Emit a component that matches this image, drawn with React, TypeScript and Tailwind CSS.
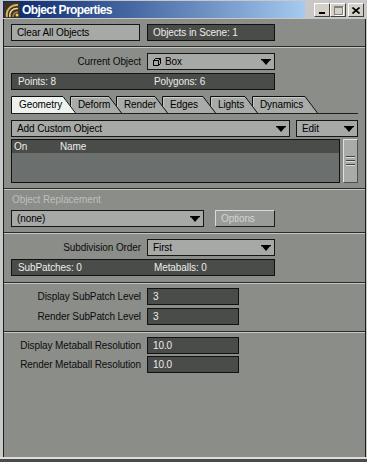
import type { ReactNode } from 'react';

const tabs = [
    { label: 'Geometry', w: 65 },
    { label: 'Deform', w: 52 },
    { label: 'Render', w: 52 },
    { label: 'Edges', w: 54 },
    { label: 'Lights', w: 48 },
    { label: 'Dynamics', w: 66 },
];

const tabZ = ['z-[6]', 'z-[5]', 'z-[4]', 'z-[3]', 'z-[2]', 'z-[1]'];

function Arrow() {
    return (
        <svg width="10" height="6" viewBox="0 0 10 6" className="shrink-0">
            <path d="M0 0H10V1.2H9L5 6L1 1.2H0Z" fill="#000" />
        </svg>
    );
}

function Dropdown({ children, className = '' }: { children: ReactNode; className?: string }) {
    return (
        <div
            className={`flex h-[17px] items-center justify-between border border-[#151515] bg-[#a6a9a6] pr-[3px] pl-[5px] text-black ${className}`}
        >
            <div className="flex items-center gap-[4px]">{children}</div>
            <Arrow />
        </div>
    );
}

function DarkField({ children, className = '' }: { children?: ReactNode; className?: string }) {
    return (
        <div
            className={`flex h-[17px] items-center border border-[#111] bg-[#4a4c49] pl-[5px] text-[#ececec] ${className}`}
        >
            {children}
        </div>
    );
}

function Separator() {
    return (
        <div>
            <div className="h-px bg-[#2a2b29]" />
            <div className="h-px bg-[#c6c8c5]" />
        </div>
    );
}

function LabeledRow({ label, children }: { label: string; children: ReactNode }) {
    return (
        <div className="flex items-center">
            <div className="w-[130px] text-right whitespace-nowrap text-[#0c0c0c]">{label}</div>
            <div className="ml-[6px]">{children}</div>
        </div>
    );
}

function Tab({ label, w, active, z, first }: { label: string; w: number; active: boolean; z: string; first: boolean }) {
    const top = w - 13;
    return (
        <div className={`relative h-[17px] shrink-0 ${z} ${first ? '' : '-ml-[6px]'}`} style={{ width: w }}>
            <svg width={w} height="17" className="absolute inset-0">
                <polygon points={`0,17 0,0 ${top},0 ${w},17`} fill={active ? '#eef2ee' : '#a9aba9'} />
                {!active && <path d={`M1.5 17V1.5H${top - 0.5}`} fill="none" stroke="#c9cbc9" />}
                <path d={`M0.5 17V0.5H${top}L${w - 0.5} 17`} fill="none" stroke="#0e0e0e" />
            </svg>
            <span className="relative block pt-[2px] pl-[8px] leading-[13px] text-black">{label}</span>
        </div>
    );
}

function TitleButton({ children }: { children: ReactNode }) {
    return (
        <div className="flex h-[14px] w-[16px] items-center justify-center border-t border-l border-t-white border-l-white border-r border-b border-r-[#404040] border-b-[#404040] bg-[#d4d0c8]">
            {children}
        </div>
    );
}

export default function App() {
    return (
        <div className="flex h-[462px] w-[367px] flex-col overflow-hidden bg-[#c8c8c8] font-['Liberation_Sans',Arial,sans-serif] text-[10px] tracking-[-0.1px]">
            {/* Title bar */}
            <div className="flex h-[19px] shrink-0 items-start pt-px">
                <div className="ml-[3px] flex h-[17px] w-[302px] items-center bg-linear-to-r from-[#0a246a] to-[#a6caf0]">
                    <svg width="16" height="16" viewBox="0 0 16 16" className="ml-px shrink-0">
                        <rect width="16" height="16" fill="#3a3426" />
                        <path d="M3 15 A10 10 0 0 1 14 3" fill="none" stroke="#d8b060" strokeWidth="2" />
                        <path d="M6 15 A7 7 0 0 1 14 6.5" fill="none" stroke="#f0d890" strokeWidth="1.5" />
                        <path d="M9 15 A4.5 4.5 0 0 1 14 10" fill="none" stroke="#b08840" strokeWidth="1.5" />
                        <circle cx="13" cy="13" r="1.5" fill="#e8c870" />
                    </svg>
                    <span className="ml-[2px] text-[12px] font-bold tracking-[-0.6px] text-white">Object Properties</span>
                </div>
                <div className="flex flex-1 justify-end pt-[2px] pr-[3px]">
                    <TitleButton>
                        <div className="mt-[6px] h-[2px] w-[6px] bg-black" />
                    </TitleButton>
                    <TitleButton>
                        <div className="h-[9px] w-[9px] border border-t-2 border-[#808080] shadow-[1px_1px_0_#fff]" />
                    </TitleButton>
                    <div className="ml-[2px]">
                        <TitleButton>
                            <svg width="8" height="7" viewBox="0 0 8 7">
                                <path d="M0.5 0.5L7.5 6.5M7.5 0.5L0.5 6.5" stroke="#000" strokeWidth="1.6" />
                            </svg>
                        </TitleButton>
                    </div>
                </div>
            </div>

            {/* Window body */}
            <div className="ml-[3px] mr-px flex flex-1 flex-col border-r border-l border-[#1c1c1c] bg-[#8b8d89]">
                {/* Scene row */}
                <div className="flex px-[7px] pt-[5px] pb-[5px]">
                    <div className="flex h-[17px] w-[129px] items-center border border-[#151515] bg-[#a6a9a6] pl-[5px] text-black">
                        Clear All Objects
                    </div>
                    <DarkField className="ml-[7px] w-[128px]">Objects in Scene: 1</DarkField>
                </div>
                <Separator />

                {/* Current object + tabs */}
                <div className="flex flex-col px-[7px] pt-[5px] pb-[5px]">
                    <LabeledRow label="Current Object">
                        <Dropdown className="w-[128px]">
                            <svg width="8" height="8" viewBox="0 0 8 8">
                                <path d="M0.5 2.5H5.5V7.5H0.5Z M0.5 2.5L2.5 0.5H7.5V5.5L5.5 7.5 M5.5 2.5L7.5 0.5" fill="none" stroke="#000" />
                            </svg>
                            <span>Box</span>
                        </Dropdown>
                    </LabeledRow>
                    <DarkField className="mt-[3px] w-[264px] pl-[6px]">
                        <span className="w-[136px]">Points: 8</span>
                        <span>Polygons: 6</span>
                    </DarkField>

                    <div className="mt-[6px] flex">
                        {tabs.map((t, i) => (
                            <Tab key={t.label} label={t.label} w={t.w} active={i === 0} z={tabZ[i]} first={i === 0} />
                        ))}
                    </div>
                    <div className="h-px w-[347px] bg-[#1e1e1e]" />

                    <div className="mt-[6px] flex">
                        <Dropdown className="w-[279px]">
                            <span>Add Custom Object</span>
                        </Dropdown>
                        <Dropdown className="ml-[6px] w-[62px]">
                            <span>Edit</span>
                        </Dropdown>
                    </div>

                    <div className="mt-[2px] flex">
                        <div className="flex h-[44px] w-[329px] flex-col border border-[#111] bg-[#6b6f6d]">
                            <div className="flex h-[13px] items-center bg-[#4a4c49] pl-[2px] text-[#ececec]">
                                <span className="w-[46px]">On</span>
                                <span>Name</span>
                            </div>
                        </div>
                        <div className="ml-[3px] flex h-[44px] w-[15px] flex-col items-center justify-center gap-[2px] border border-t-[#e0e0e0] border-l-[#e0e0e0] border-r-[#505050] border-b-[#505050] bg-[#a9aba9]">
                            {[0, 1, 2].map((n) => (
                                <div key={n} className="h-[2px] w-[9px] border-b border-t border-t-[#444] border-b-[#dcdcdc]" />
                            ))}
                        </div>
                    </div>
                </div>
                <Separator />

                {/* Object replacement */}
                <div className="flex flex-col px-[7px] pt-[4px] pb-[5px]">
                    <div className="h-[12px] pl-px leading-[12px] text-[#bcbfbc]">Object Replacement</div>
                    <div className="mt-[4px] flex">
                        <Dropdown className="w-[193px]">
                            <span>(none)</span>
                        </Dropdown>
                        <div className="ml-[11px] flex h-[17px] w-[60px] items-center border border-t-[#d8dad8] border-l-[#d8dad8] border-r-[#1c1c1c] border-b-[#1c1c1c] bg-[#989b98] pl-[5px] text-[#d2d5d2]">
                            Options
                        </div>
                    </div>
                </div>
                <Separator />

                {/* Subdivision */}
                <div className="flex flex-col px-[7px] pt-[5px] pb-[6px]">
                    <LabeledRow label="Subdivision Order">
                        <Dropdown className="w-[128px]">
                            <span>First</span>
                        </Dropdown>
                    </LabeledRow>
                    <DarkField className="mt-[3px] w-[264px] pl-[6px]">
                        <span className="w-[136px]">SubPatches: 0</span>
                        <span>Metaballs: 0</span>
                    </DarkField>
                </div>
                <Separator />

                {/* SubPatch levels */}
                <div className="flex flex-col px-[7px] pt-[4px] pb-[6px]">
                    <LabeledRow label="Display SubPatch Level">
                        <DarkField className="w-[92px]">3</DarkField>
                    </LabeledRow>
                    <div className="mt-[3px]">
                        <LabeledRow label="Render SubPatch Level">
                            <DarkField className="w-[92px]">3</DarkField>
                        </LabeledRow>
                    </div>
                </div>
                <Separator />

                {/* Metaball resolution */}
                <div className="flex flex-col px-[7px] pt-[4px]">
                    <LabeledRow label="Display Metaball Resolution">
                        <DarkField className="w-[92px] pl-[3px]">10.0</DarkField>
                    </LabeledRow>
                    <div className="mt-[2px]">
                        <LabeledRow label="Render Metaball Resolution">
                            <DarkField className="w-[92px] pl-[3px]">10.0</DarkField>
                        </LabeledRow>
                    </div>
                </div>
            </div>
            <div className="h-[2px] shrink-0 bg-[#dcdcdc]" />
            <div className="h-[3px] shrink-0 bg-[#4a4a4a]" />
        </div>
    );
}
